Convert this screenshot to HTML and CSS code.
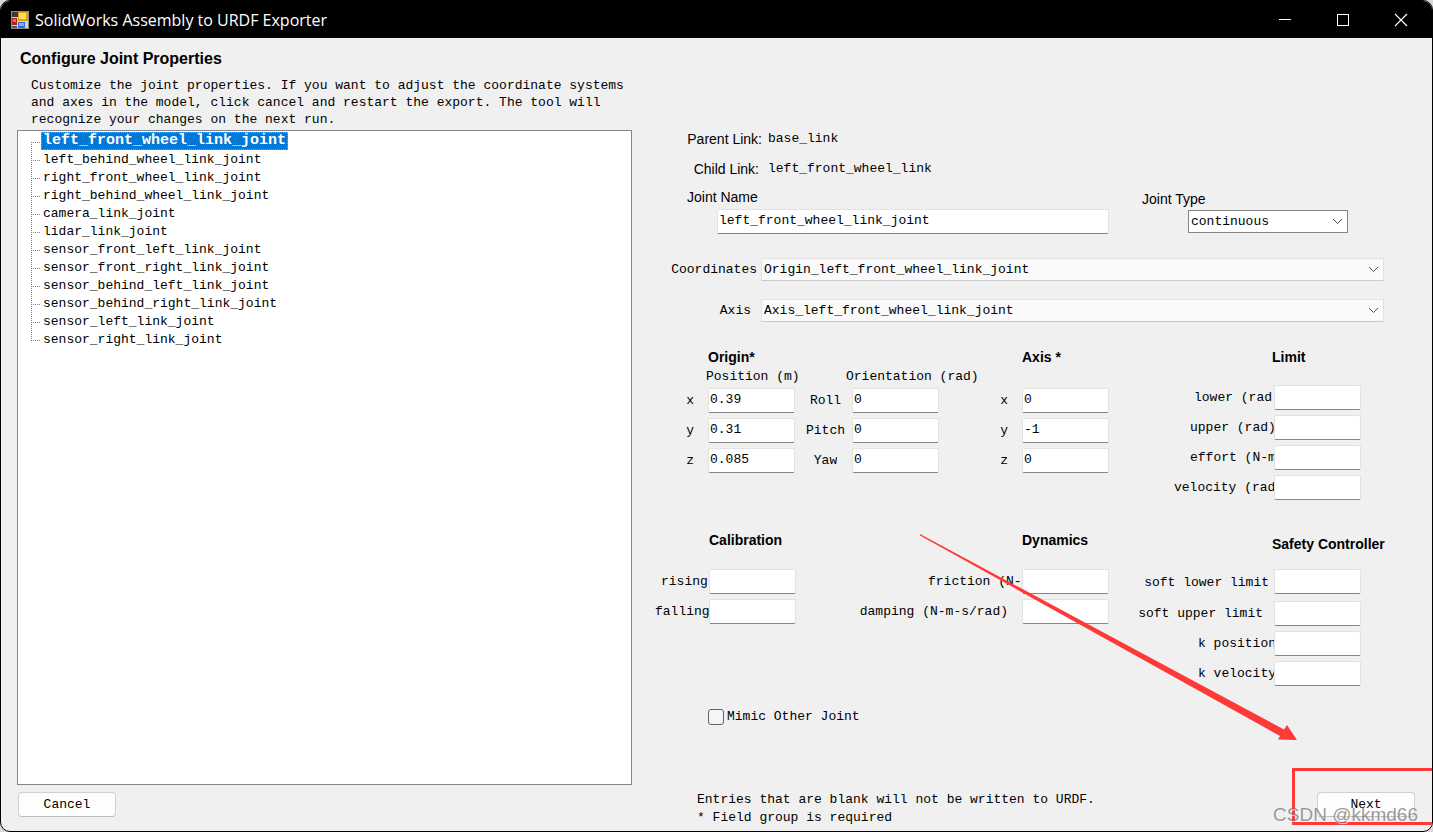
FILE: index.html
```html
<!DOCTYPE html>
<html lang="en">
<head>
<meta charset="utf-8">
<title>SolidWorks Assembly to URDF Exporter</title>
<link rel="stylesheet" href="styles.css">
</head>
<body>
<div class="window">
  <header class="titlebar">
    <svg class="app-icon" width="18" height="18" viewBox="0 0 18 18" aria-hidden="true">
      <rect width="18" height="18" fill="#8c8c8c"/>
      <rect x="1" y="1" width="16" height="16" fill="#d4d4d4"/>
      <rect x="1" y="1" width="6" height="5" fill="#3a3a3a"/>
      <rect x="1" y="7" width="5" height="7" fill="#a82020"/>
      <rect x="2" y="8" width="3" height="3" fill="#e86868"/>
      <rect x="7" y="1" width="10" height="9" fill="#e0a010"/>
      <rect x="8" y="2" width="7" height="6" fill="#fddc60"/>
      <rect x="1" y="15" width="5" height="2" fill="#555"/>
      <rect x="7" y="11" width="7" height="6" fill="#2f6fe0"/>
      <rect x="8" y="12" width="5" height="3" fill="#7aacff"/>
    </svg>
    <h1 class="title">SolidWorks Assembly to URDF Exporter</h1>
    <div class="controls">
      <button class="control" type="button" aria-label="Minimize"><svg width="14" height="14" viewBox="0 0 14 14"><path d="M1 6.500h12" stroke="#fff"/></svg></button>
      <button class="control" type="button" aria-label="Maximize"><svg width="14" height="14" viewBox="0 0 14 14"><rect x="1.500" y="1.500" width="11" height="11" fill="none" stroke="#fff"/></svg></button>
      <button class="control" type="button" aria-label="Close"><svg width="14" height="14" viewBox="0 0 14 14"><path d="M1 1l12 12M13 1L1 13" stroke="#fff" stroke-width="1.200"/></svg></button>
    </div>
  </header>

  <main class="content">
    <section class="side">
      <h2 class="heading">Configure Joint Properties</h2>
      <p class="intro">Customize the joint properties. If you want to adjust the coordinate systems<br>and axes in the model, click cancel and restart the export. The tool will<br>recognize your changes on the next run.</p>
      <ul class="tree">
        <li class="node"><span class="name selected">left_front_wheel_link_joint</span></li>
        <li class="node"><span class="name">left_behind_wheel_link_joint</span></li>
        <li class="node"><span class="name">right_front_wheel_link_joint</span></li>
        <li class="node"><span class="name">right_behind_wheel_link_joint</span></li>
        <li class="node"><span class="name">camera_link_joint</span></li>
        <li class="node"><span class="name">lidar_link_joint</span></li>
        <li class="node"><span class="name">sensor_front_left_link_joint</span></li>
        <li class="node"><span class="name">sensor_front_right_link_joint</span></li>
        <li class="node"><span class="name">sensor_behind_left_link_joint</span></li>
        <li class="node"><span class="name">sensor_behind_right_link_joint</span></li>
        <li class="node"><span class="name">sensor_left_link_joint</span></li>
        <li class="node"><span class="name">sensor_right_link_joint</span></li>
      </ul>
      <button class="button cancel" type="button">Cancel</button>
    </section>

    <section class="props">
      <form class="form">
        <dl class="links">
          <dt>Parent Link:</dt><dd>base_link</dd>
          <dt class="child">Child Link:</dt><dd>left_front_wheel_link</dd>
        </dl>

        <div class="identity">
          <div class="joint-name">
            <label class="caption" for="joint-name">Joint Name</label>
            <input class="field" id="joint-name" type="text" value="left_front_wheel_link_joint">
          </div>
          <div class="joint-type">
            <label class="caption" for="joint-type">Joint Type</label>
            <div class="combo strong">
              <select class="select" id="joint-type"><option>continuous</option></select>
              <svg class="chevron" width="11" height="7" viewBox="0 0 11 7"><path d="M1 1l4.500 4.500L10 1" fill="none" stroke="#505050"/></svg>
            </div>
          </div>
        </div>

        <div class="references">
          <label class="coord-label" for="coordinates">Coordinates</label>
          <div class="combo">
            <select class="select" id="coordinates"><option>Origin_left_front_wheel_link_joint</option></select>
            <svg class="chevron" width="11" height="7" viewBox="0 0 11 7"><path d="M1 1l4.500 4.500L10 1" fill="none" stroke="#505050"/></svg>
          </div>
          <label class="axis-label" for="axis">Axis</label>
          <div class="combo">
            <select class="select" id="axis"><option>Axis_left_front_wheel_link_joint</option></select>
            <svg class="chevron" width="11" height="7" viewBox="0 0 11 7"><path d="M1 1l4.500 4.500L10 1" fill="none" stroke="#505050"/></svg>
          </div>
        </div>

        <div class="groups first">
          <div class="pair">
            <section class="group origin">
              <h3 class="group-title">Origin*</h3>
              <span class="sub position">Position (m)</span>
              <span class="sub orientation">Orientation (rad)</span>
              <label class="letter" for="ox">x</label><input class="field" id="ox" type="text" value="0.39">
              <label class="angle" for="roll">Roll</label><input class="field" id="roll" type="text" value="0">
              <label class="letter" for="oy">y</label><input class="field" id="oy" type="text" value="0.31">
              <label class="angle" for="pitch">Pitch</label><input class="field" id="pitch" type="text" value="0">
              <label class="letter" for="oz">z</label><input class="field" id="oz" type="text" value="0.085">
              <label class="angle" for="yaw">Yaw</label><input class="field" id="yaw" type="text" value="0">
            </section>
            <section class="group axis">
              <h3 class="group-title">Axis *</h3>
              <label class="letter" for="ax">x</label><input class="field" id="ax" type="text" value="0">
              <label class="letter" for="ay">y</label><input class="field" id="ay" type="text" value="-1">
              <label class="letter" for="az">z</label><input class="field" id="az" type="text" value="0">
            </section>
          </div>
          <section class="group wide limit">
            <h3 class="group-title">Limit</h3>
            <label class="w80" for="lower">lower (rad</label><input class="field" id="lower" type="text">
            <label class="w84" for="upper">upper (rad)</label><input class="field" id="upper" type="text">
            <label class="w84" for="effort">effort (N-m</label><input class="field" id="effort" type="text">
            <label class="w100" for="velocity">velocity (rad</label><input class="field" id="velocity" type="text">
          </section>
        </div>

        <div class="groups second">
          <div class="pair">
            <section class="group calibration">
              <h3 class="group-title">Calibration</h3>
              <label class="w48" for="rising">rising</label><input class="field" id="rising" type="text">
              <label class="w54" for="falling">falling</label><input class="field" id="falling" type="text">
            </section>
            <section class="group dynamics">
              <h3 class="group-title">Dynamics</h3>
              <label class="w94" for="friction">friction (N-</label><input class="field" id="friction" type="text">
              <label class="damping" for="damping">damping (N-m-s/rad)</label><input class="field" id="damping" type="text">
            </section>
          </div>
          <section class="group wide safety">
            <h3 class="group-title">Safety Controller</h3>
            <label class="soft-lower" for="soft-lower">soft lower limit</label><input class="field" id="soft-lower" type="text">
            <label class="soft-upper" for="soft-upper">soft upper limit</label><input class="field" id="soft-upper" type="text">
            <label class="w76" for="kpos">k position</label><input class="field" id="kpos" type="text">
            <label class="w76" for="kvel">k velocity</label><input class="field" id="kvel" type="text">
          </section>
        </div>

        <label class="mimic"><input class="check" type="checkbox">Mimic Other Joint</label>
      </form>

      <footer class="footer">
        <p class="notes">Entries that are blank will not be written to URDF.<br>* Field group is required</p>
        <button class="button" type="button">Next</button>
      </footer>
    </section>
  </main>

  <svg class="markup" viewBox="0 0 1433 832" preserveAspectRatio="none" aria-hidden="true">
    <path d="M920 534L1284 729.500L1287 725L1297 740L1278 739.500L1280 736L920 535.500Z" fill="#fd3a38"/>
    <path d="M1433 769.500H1293.500V823.500H1433" fill="none" stroke="#fd3a38" stroke-width="3"/>
  </svg>
  <span class="watermark">CSDN @kkmd66</span>
</div>
</body>
</html>
```
FILE: styles.css
```css
* { box-sizing: border-box; }

body {
  margin: 0;
  background: #d8d8d8;
  color: #000;
  font: 13px/18px "Liberation Mono", "Courier New", monospace;
}

h1, h2, h3, p, ul, dl, dd { margin: 0; padding: 0; }

input, select, button { font: inherit; color: inherit; }

.window {
  position: relative;
  display: flex;
  flex-direction: column;
  min-height: 100vh;
  border: 1px solid #000;
  border-radius: 10px;
  background: #f0f0f0;
  overflow: hidden;
}

/* Title bar */
.titlebar {
  display: flex;
  align-items: center;
  height: 37px;
  padding: 0 2px 0 10px;
  background: #000;
  color: #fff;
}

.title {
  flex: 1;
  margin-left: 6px;
  font: 16px/24px "Open Sans", "Noto Sans", sans-serif;
}

.controls { display: flex; }

.control {
  display: flex;
  align-items: center;
  justify-content: center;
  width: 58px;
  height: 37px;
  padding: 0;
  border: 0;
  background: none;
}

/* Page */
.content {
  flex: 1;
  display: grid;
  grid-template-columns: 615fr 800fr;
  padding-left: 16px;
}

.side, .props {
  display: flex;
  flex-direction: column;
  min-width: 0;
}

.heading {
  margin: 10px 0 0 3px;
  font: bold 16px/22px "Liberation Sans", Arial, sans-serif;
}

.intro {
  margin: 7px 0 2px 14px;
  line-height: 17px;
  white-space: nowrap;
}

.tree {
  flex: 1;
  padding: 1px 0 0 13px;
  border: 1px solid #828790;
  background: #fff;
  list-style: none;
}

.node {
  display: flex;
  height: 18px;
}

.node::before {
  content: "";
  width: 10px;
  background:
    repeating-linear-gradient(90deg, #808080 0 1px, transparent 1px 2px) 0 10px / 10px 1px no-repeat,
    repeating-linear-gradient(180deg, #808080 0 1px, transparent 1px 2px) 0 0 / 1px 18px no-repeat;
}

.node:first-child::before {
  background-size: 10px 1px, 1px 8px;
  background-position: 0 10px, 0 10px;
}

.node:last-child::before { background-size: 10px 1px, 1px 10px; }

.name {
  padding: 0 2px;
  line-height: 20px;
}

.selected {
  background: #0078d7;
  color: #fff;
  font-size: 15px;
  font-weight: bold;
  line-height: 18px;
  outline: 1px dotted #ff8728;
  outline-offset: -1px;
}

.button {
  width: 98px;
  height: 25px;
  padding: 0;
  border: 1px solid #d0d0d0;
  border-bottom-color: #bcbcbc;
  border-radius: 4px;
  background: #fdfdfd;
}

.cancel { margin: 7px 0 14px 1px; }

/* Form */
.form { padding: 86px 48px 0 24px; }

.caption, dt { font: 14px/18px "Liberation Sans", Arial, sans-serif; }

.links {
  display: grid;
  grid-template-columns: 106px 1fr;
  column-gap: 6px;
  grid-auto-rows: 30px;
  align-items: center;
}

dt { text-align: right; }

.child { padding-right: 3px; }

.identity {
  display: grid;
  grid-template-columns: 453fr 275fr;
  padding-top: 4px;
}

.joint-name {
  display: flex;
  flex-direction: column;
  padding-left: 31px;
}

.joint-name .field { margin: 3px 0 0 30px; }

.joint-type {
  display: flex;
  flex-direction: column;
  align-items: flex-start;
  padding: 2px 36px 0 33px;
}

.joint-type .caption {
  position: relative;
  z-index: 1;
  padding: 0 2px 1px 0;
  background: #f0f0f0;
}

.joint-type .combo {
  align-self: stretch;
  margin: 1px 0 0 46px;
}

.field {
  display: block;
  width: 87px;
  height: 25px;
  min-width: 0;
  padding: 0 1px 2px;
  border: 1px solid #e2e2e2;
  border-bottom-color: #868686;
  border-radius: 2px;
  background: #fff;
}

.joint-name .field { width: auto; }

.combo {
  display: grid;
  align-items: center;
  height: 23px;
  border: 1px solid #e2e2e2;
  border-bottom-color: #cacaca;
  background: #fafafa;
}

.strong {
  border-color: #858585;
  background: #fff;
}

.select, .chevron { grid-area: 1 / 1; }

.select {
  appearance: none;
  width: 100%;
  height: 21px;
  padding: 1px 20px 0 2px;
  border: 0;
  background: transparent;
}

.chevron {
  justify-self: end;
  margin-right: 4px;
  pointer-events: none;
}

.references {
  display: grid;
  grid-template-columns: 105px 1fr;
  row-gap: 18px;
  align-items: center;
  margin-top: 24px;
  text-align: right;
}

.coord-label { padding-right: 4px; }

.axis-label { padding-right: 10px; }

.groups {
  display: grid;
  grid-template-columns: 453fr 252fr;
  padding-right: 23px;
}

.first { margin-top: 26px; }

.second { margin-top: 31px; }

.pair {
  display: flex;
  justify-content: space-between;
}

.group {
  display: grid;
  align-content: start;
  align-items: center;
  row-gap: 5px;
  white-space: nowrap;
}

.group label {
  justify-self: end;
  overflow: hidden;
}

.group-title {
  grid-column: 2 / -1;
  font: bold 14px/18px "Liberation Sans", Arial, sans-serif;
}

.origin { grid-template-columns: 52px 87px 57px 87px; }

.origin .group-title { margin-bottom: -3px; }

.sub { margin: 0 -60px -3px -2px; }

.position { grid-column: 2; }

.orientation {
  grid-column: 4;
  margin-left: -6px;
}

.letter { padding-right: 14px; }

.group .angle {
  justify-self: center;
  padding-left: 4px;
}

.axis { grid-template-columns: 83px 87px; }

.axis .group-title { margin-bottom: 17px; }

.wide {
  grid-template-columns: 139px 87px;
  justify-content: end;
}

.wide .group-title { margin-left: -2px; }

.limit .group-title { margin-bottom: 14px; }

.calibration { grid-template-columns: 53px 87px; }

.dynamics { grid-template-columns: 167px 87px; }

.calibration .group-title, .dynamics .group-title { margin-bottom: 15px; }

.safety { padding-top: 4px; }

.safety .group-title { margin-bottom: 11px; }

.safety .field:first-of-type { margin-bottom: 2px; }

.w48 { width: 48px; }
.w54 { width: 54px; }
.w76 { width: 76px; }
.w80 { width: 80px; }
.w84 { width: 84px; }
.w94 { width: 94px; }
.w100 { width: 100px; }

.damping { padding-right: 14px; }
.soft-lower { padding-right: 5px; }
.soft-upper { padding-right: 11px; }

.mimic {
  display: inline-flex;
  align-items: center;
  gap: 3px;
  margin: 22px 0 0 52px;
}

.check {
  appearance: none;
  width: 16px;
  height: 16px;
  margin: 0;
  border: 1px solid #626262;
  border-radius: 3px;
  background: #f5f5f5;
}

.footer {
  display: flex;
  justify-content: space-between;
  align-items: flex-start;
  margin-top: auto;
  padding: 0 17px 4px 65px;
}

.footer .button { margin-top: 1px; }

/* Annotations drawn over the window */
.markup {
  position: absolute;
  inset: -1px;
  width: calc(100% + 2px);
  height: calc(100% + 2px);
  pointer-events: none;
}

.watermark {
  position: absolute;
  right: 14px;
  bottom: 4px;
  color: rgba(110, 110, 110, 0.7);
  font: 19px/24px "Liberation Sans", Arial, sans-serif;
  text-shadow: 1px 1px 0 rgba(255, 255, 255, 0.7);
  pointer-events: none;
}
```
